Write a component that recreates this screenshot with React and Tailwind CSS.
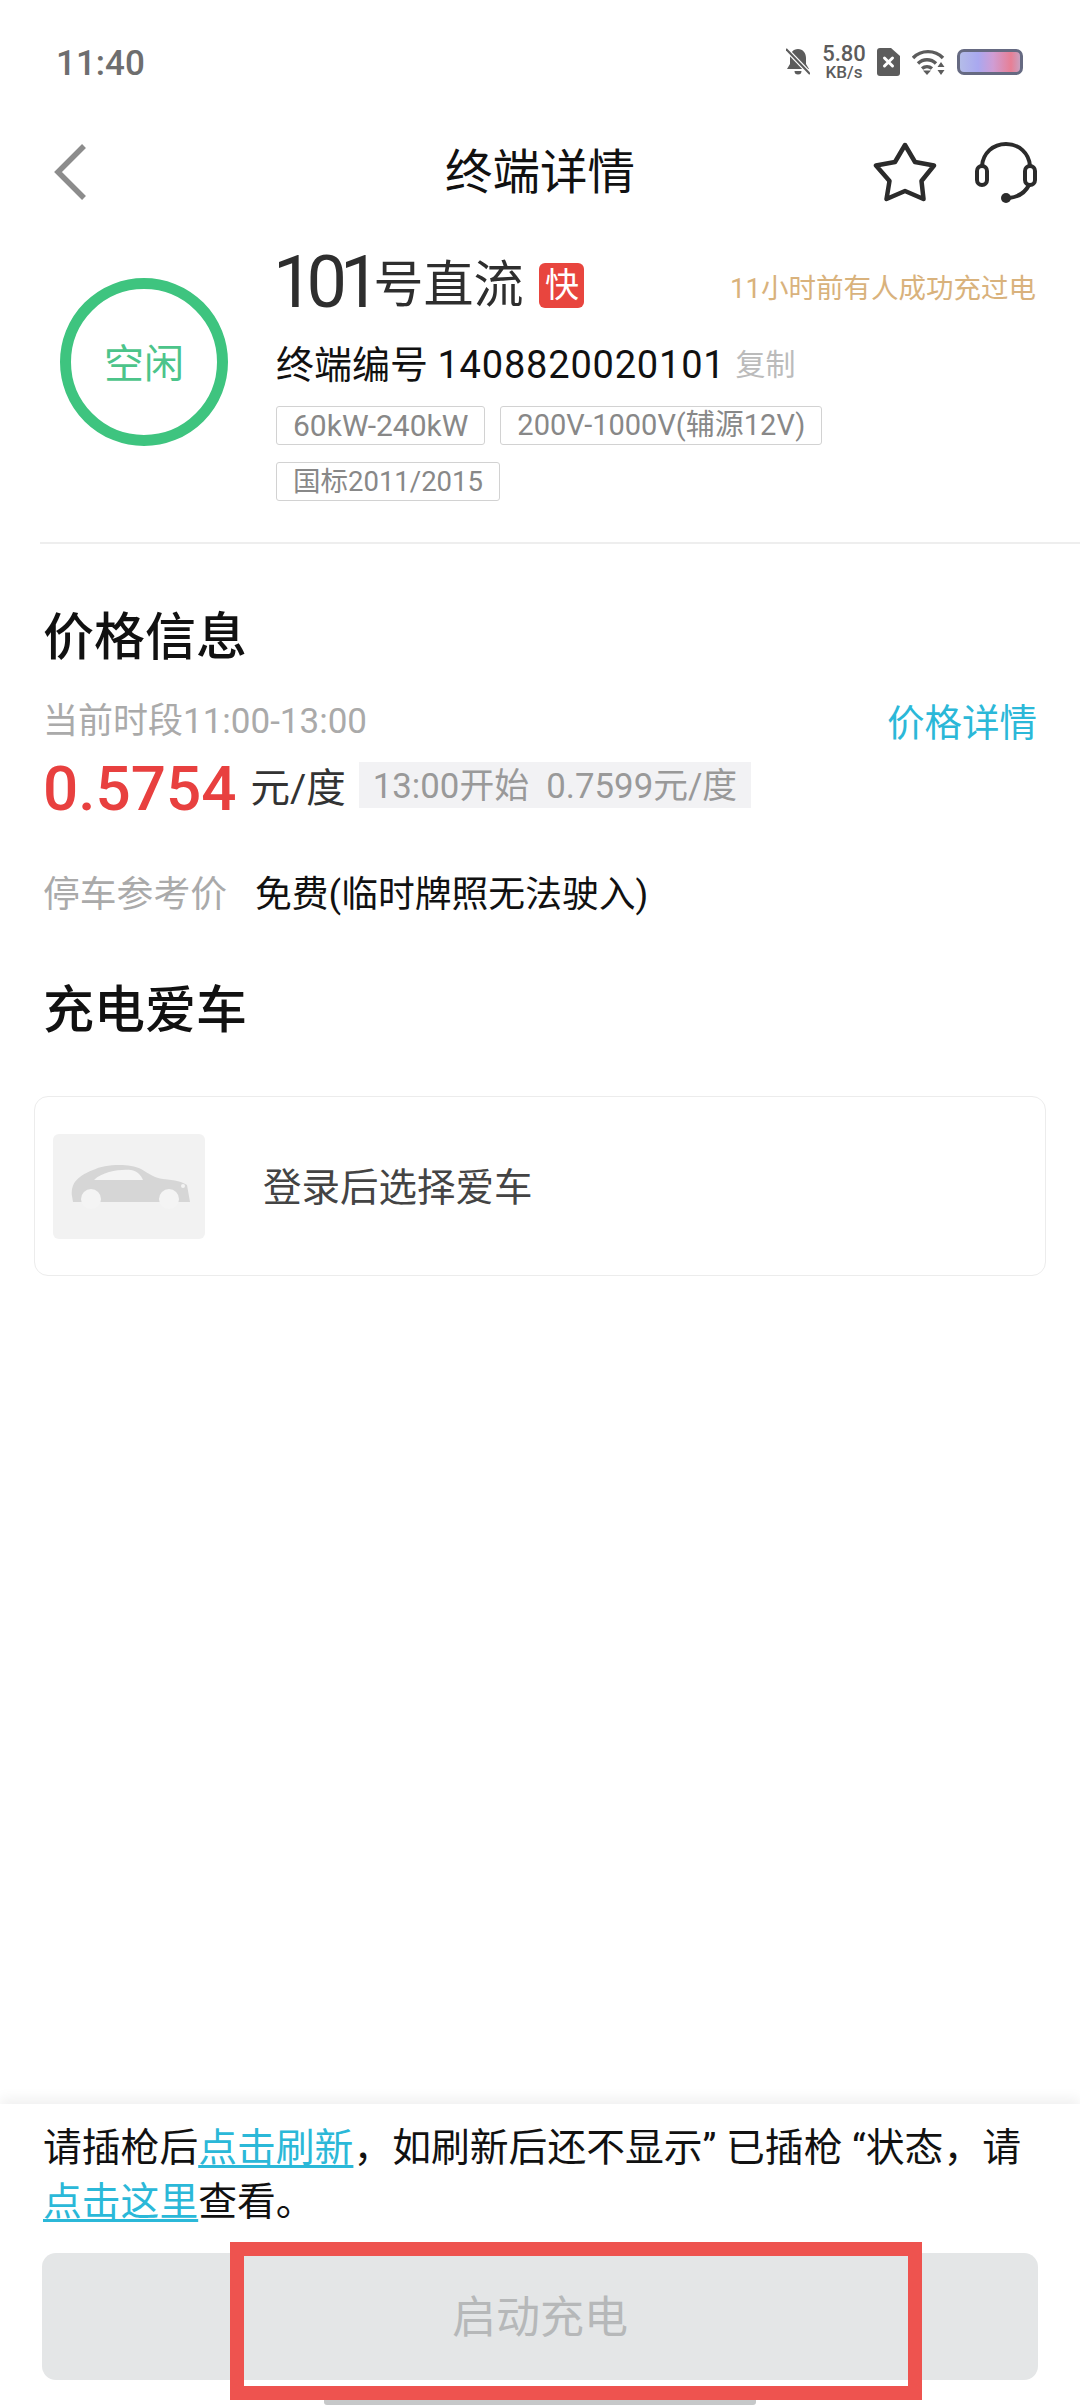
import React from "react";

const BellOff = () => (
    <svg width="24" height="28" viewBox="0 0 24 28" className="shrink-0">
        <path d="M12 1c5 0 8 4 8 9v6l3 5H1l3-5v-6c0-5 3-9 8-9z" fill="#5c5c5c" />
        <path d="M8.5 23h7a3.5 3.5 0 0 1-7 0z" fill="#5c5c5c" />
        <path d="M0 1l24 25" stroke="#fff" strokeWidth="4.500" />
        <path d="M0 1l24 25" stroke="#5c5c5c" strokeWidth="2.200" />
    </svg>
);

const SimIcon = () => (
    <svg width="23" height="28" viewBox="0 0 23 28" className="shrink-0">
        <path d="M3 0h11l9 8v17a3 3 0 0 1-3 3H3a3 3 0 0 1-3-3V3a3 3 0 0 1 3-3z" fill="#5c5c5c" />
        <path d="M7.500 10l8 8M15.500 10l-8 8" stroke="#fff" strokeWidth="3" strokeLinecap="round" />
    </svg>
);

const WifiIcon = () => (
    <svg width="33" height="26" viewBox="0 0 33 26" className="shrink-0">
        <g fill="none" stroke="#5c5c5c" strokeWidth="3.400">
            <path d="M1 9c8-8.500 22-8.500 30 0" />
            <path d="M6 14.500c5-5 13-5 18 0" />
            <path d="M10 19.500c3-2.500 7-2.500 10 0" />
        </g>
        <path d="M15 26l-4-4.500h8z" fill="#5c5c5c" />
        <path d="M29 13l3.500 5h-7zM29 26l-3.500-5h7z" fill="#5c5c5c" />
    </svg>
);

const StarIcon = () => (
    <svg width="64" height="60" viewBox="0 0 64 60" className="shrink-0">
        <path
            d="M32 3L42 20L61 23.500L48.500 39L50.500 57L32 49L13.500 57L16.500 39L3 23.500L22 20Z"
            fill="none"
            stroke="#2b2b2b"
            strokeWidth="4.500"
            strokeLinejoin="round"
        />
    </svg>
);

const HeadsetIcon = () => (
    <svg width="62" height="62" viewBox="0 0 62 62" className="shrink-0">
        <g fill="none" stroke="#2b2b2b" strokeWidth="4">
            <path d="M7 25C8 12 18 3 31 3C44 3 54 12 55 25" />
            <rect x="2" y="25" width="10" height="19" rx="5" />
            <rect x="50" y="25" width="10" height="19" rx="5" />
            <path d="M54 44C50 52 43 56 34 57" />
        </g>
        <circle cx="31" cy="57" r="5" fill="#2b2b2b" />
    </svg>
);

const CarIcon = () => (
    <svg width="120" height="46" viewBox="0 0 120 46" className="ml-[4px]">
        <path
            d="M1 33C0 22 4 14 22 7C34 1 58 0 70 6C78 11 84 15 92 16C104 17 112 19 116 22L119 39H2Z"
            fill="#d6d6d6"
        />
        <path d="M23 17C32 8 50 6 60 7C66 8 70 12 72 17Z" fill="#f4f4f4" />
        <circle cx="20" cy="36" r="10" fill="#f4f4f4" />
        <circle cx="98" cy="36" r="10" fill="#f4f4f4" />
        <circle cx="112" cy="23" r="2" fill="#f4f4f4" />
    </svg>
);

const specs = [
    { label: "60kW-240kW", size: "text-[30px]" },
    { label: "200V-1000V(辅源12V)", size: "text-[29px]" },
    { label: "国标2011/2015", size: "text-[27.500px]" },
];

const App = () => {
    return (
        <div className="relative flex h-[2408px] w-[1080px] flex-col overflow-hidden bg-white font-['Roboto','Noto_Sans_CJK_SC',sans-serif]">
            {/* status bar */}
            <div className="flex h-[124px] shrink-0 items-center justify-between pl-[56px] pr-[57px]">
                <span className="pt-[3px] text-[35px] font-medium leading-none text-[#6e6e6e]">11:40</span>
                <div className="flex items-center">
                    <BellOff />
                    <div className="ml-[12px] flex w-[44px] flex-col items-center text-[#5c5c5c]">
                        <span className="text-[22px] font-medium leading-[21px]">5.80</span>
                        <span className="text-[17px] font-medium leading-[17px]">KB/s</span>
                    </div>
                    <div className="ml-[11px]">
                        <SimIcon />
                    </div>
                    <div className="ml-[12px]">
                        <WifiIcon />
                    </div>
                    <div className="ml-[12px] h-[26px] w-[66px] rounded-[7px] border-[3px] border-[#666a82] bg-[linear-gradient(90deg,#b4bce8_0%,#a9a8f0_30%,#cf9dd4_55%,#e77f95_85%,#c9a0c0_100%)]"></div>
                </div>
            </div>

            {/* nav */}
            <div className="grid h-[96px] shrink-0 grid-cols-[1fr_auto_1fr] items-center">
                <div className="pl-[54px]">
                    <svg width="33" height="58" viewBox="0 0 33 58">
                        <path d="M30 3L4 29L30 55" fill="none" stroke="#8c8c8c" strokeWidth="5.500" />
                    </svg>
                </div>
                <h1 className="pt-[3px] text-[47.500px] leading-none text-[#111]">终端详情</h1>
                <div className="flex items-center justify-end gap-[38px] pr-[43px]">
                    <StarIcon />
                    <HeadsetIcon />
                </div>
            </div>

            {/* terminal info */}
            <div className="ml-[40px] flex h-[324px] shrink-0 items-start border-b-2 border-[#eeeeee] pl-[20px] pr-[43px]">
                <div className="mt-[58px] flex h-[168px] w-[168px] shrink-0 items-center justify-center rounded-full border-[11px] border-[#3ec47f]">
                    <span className="pt-[6px] text-[40px] leading-none text-[#4cc48a]">空闲</span>
                </div>
                <div className="ml-[48px] flex-1">
                    <div className="mt-[30px] flex h-[70px] items-center">
                        <span className="-ml-[3px] mb-[4px] text-[72px] leading-none tracking-[-7px] text-[#2e2e2e]">101</span>
                        <span className="text-[50px] leading-none text-[#2e2e2e]">号直流</span>
                        <span className="ml-[16px] flex h-[45px] w-[45px] items-center justify-center rounded-[6px] bg-[#e8453e] text-[34px] leading-none text-white">
                            快
                        </span>
                        <span className="ml-auto pr-[1px] pt-[8px] text-[27.500px] leading-none text-[#d9b27c]">11小时前有人成功充过电</span>
                    </div>
                    <div className="mt-[20px] flex h-[50px] items-center">
                        <span className="text-[38px] leading-none text-[#111]">
                            终端编号 <span className="tracking-[0.800px]">1408820020101</span>
                        </span>
                        <span className="ml-[10px] text-[30px] leading-none text-[#bbbbbb]">复制</span>
                    </div>
                    <div className="mt-[16px] flex flex-wrap gap-x-[15px] gap-y-[17px]">
                        {specs.map((spec) => (
                            <span
                                key={spec.label}
                                className={`flex h-[39px] items-center rounded-[3px] border-[1.500px] border-[#d2d2d2] px-[16px] leading-none text-[#888] ${spec.size}`}
                            >
                                {spec.label}
                            </span>
                        ))}
                    </div>
                </div>
            </div>

            {/* price + car */}
            <div className="flex-1 pl-[43px] pr-[43px]">
                <h2 className="mt-[57px] flex h-[70px] items-center pt-[3px] text-[51px] font-medium leading-none text-[#111]">价格信息</h2>
                <div className="mt-[28px] flex h-[44px] items-center justify-between">
                    <span className="text-[35px] leading-none text-[#aaaaaa]">当前时段11:00-13:00</span>
                    <span className="pt-[6px] text-[37.500px] leading-none text-[#2bb8d8]">价格详情</span>
                </div>
                <div className="mt-[19px] flex h-[46px] items-center">
                    <span className="pt-[8px] text-[62px] font-medium leading-none text-[#e8403f]">0.5754</span>
                    <span className="ml-[14px] pt-[8px] text-[39.500px] leading-none text-[#333]">元/度</span>
                    <span className="ml-[13px] flex h-[46px] items-center whitespace-pre bg-[#f2f2f4] px-[14px] pt-[3px] text-[34.800px] leading-none text-[#999]">
                        13:00开始  0.7599元/度
                    </span>
                </div>
                <div className="mt-[62px] flex h-[50px] items-center">
                    <span className="text-[36.800px] leading-none text-[#aaaaaa]">停车参考价</span>
                    <span className="ml-[28px] text-[36.800px] leading-none text-[#111]">免费(临时牌照无法驶入)</span>
                </div>
                <h2 className="mt-[55px] flex h-[70px] items-center text-[51px] font-medium leading-none text-[#111]">充电爱车</h2>
                <div className="-ml-[9px] mt-[51px] flex h-[180px] w-[1012px] items-center rounded-[14px] border-[1.500px] border-[#ececec] pl-[18px]">
                    <div className="flex h-[105px] w-[152px] items-center justify-center rounded-[6px] bg-[#f2f2f2]">
                        <CarIcon />
                    </div>
                    <span className="ml-[58px] pt-[5px] text-[38.500px] leading-none text-[#444]">登录后选择爱车</span>
                </div>
            </div>

            {/* bottom panel */}
            <div className="shrink-0 bg-white px-[42px] pb-[28px] pt-[17px] shadow-[0_-6px_12px_rgba(0,0,0,0.06)]">
                <p className="pl-[1px] text-[38.800px] leading-[54px] text-[#111]">
                    请插枪后<span className="text-[#2bb8d8] underline underline-offset-4">点击刷新</span>，如刷新后还不显示” 已插枪 “状态，请
                    <br />
                    <span className="text-[#2bb8d8] underline underline-offset-4">点击这里</span>查看。
                </p>
                <div className="mt-[24px] flex h-[127px] items-center justify-center rounded-[14px] bg-[#e4e6e7] pt-[3px] text-[44px] leading-none text-[#b6b8b9]">
                    启动充电
                </div>
            </div>

            {/* annotation box + home bar lie over the panel */}
            <div className="absolute left-[230px] top-[2242px] h-[158px] w-[692px] border-[14px] border-[#ee534f]"></div>
            <div className="absolute left-[324px] top-[2400px] h-[5px] w-[432px] rounded-b-[3px] bg-[#c6c8c9]"></div>
        </div>
    );
};

export default App;
